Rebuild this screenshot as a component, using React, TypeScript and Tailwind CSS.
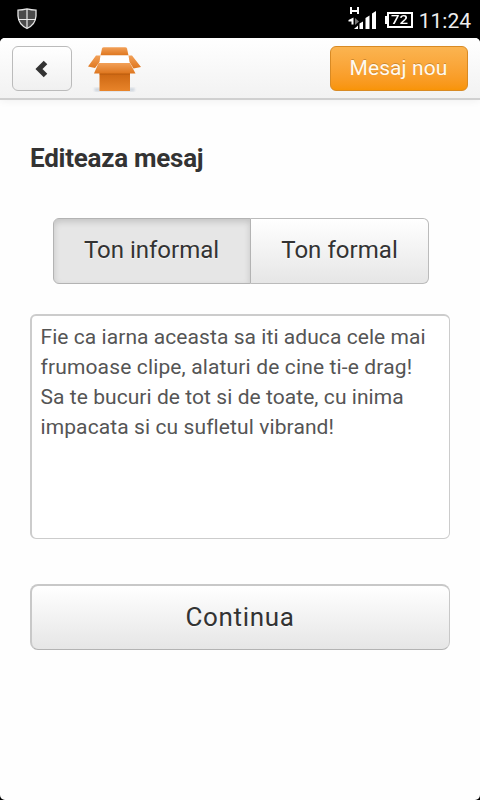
import React from "react";

function ShieldIcon() {
  return (
    <svg width="20" height="22" viewBox="0 0 20 22" className="block">
      <path d="M1 2.2Q5.500 2 10 .9Q14.500 2 19 2.200V8Q18.500 16.500 10 20.500Q1.500 16.500 1 8Z" fill="#4b4b4b" stroke="#e6e6e6" strokeWidth="1.3" />
      <path d="M10 1v19M1.300 11.500h17.400" stroke="#ececec" strokeWidth="1.200" />
    </svg>
  );
}

function SignalIcon() {
  return (
    <svg width="30" height="24" viewBox="0 0 30 24" className="block">
      <path d="M2 0h2v3h5V0h2v7H9V5H4v2H2z" fill="#fff" />
      <path d="M5.500 10.500v7h-2v-3H.5v-1.500z" fill="#fff" />
      <path d="M7 11l4 3.500-4 3.500z" fill="#777" />
      <path d="M10 18.500V22H6z" fill="#fff" />
      <path d="M11.500 16.500l3.500-2V22h-3.500zM17.500 11l4-2.500V22h-4zM24 6.500L28 4v18h-4z" fill="#fff" />
    </svg>
  );
}

function BatteryIcon() {
  return (
    <div className="flex items-center">
      <div className="h-2 w-[2px] bg-white" />
      <div className="flex h-4 w-[26px] items-center justify-center border-2 border-white">
        <span className="inline-block origin-center scale-x-[1.15] font-['Roboto',sans-serif] text-[13px] font-medium leading-none text-white">72</span>
      </div>
    </div>
  );
}

function BoxLogo() {
  return (
    <svg width="56" height="50" viewBox="0 0 56 50" className="block">
      <defs>
        <linearGradient id="flap" x1="0" y1="0" x2="0" y2="1">
          <stop offset="0" stopColor="#f2a058" />
          <stop offset="1" stopColor="#de761e" />
        </linearGradient>
        <linearGradient id="front" x1="0" y1="0" x2="0" y2="1">
          <stop offset="0" stopColor="#c9630f" />
          <stop offset="1" stopColor="#e8842a" />
        </linearGradient>
        <filter id="soft"><feGaussianBlur stdDeviation="0.8" /></filter>
      </defs>
      <path d="M8 42h41l-1 3.500H9z" fill="#b3c0cf" opacity=".6" filter="url(#soft)" />
      <path d="M16 2.500Q16.300 1.200 18 1.200h21q1.700 0 2 1.300L42.500 9.500H14.500z" fill="url(#flap)" />
      <path d="M14.500 9.500h28l2 8H12.500z" fill="#fff" />
      <path d="M14.500 9.500L10 9.500 2 20.500l7 1.500L13.500 16zM42.500 9.500h3.500l9 11.500-7.500 1.500L43.500 16z" fill="url(#flap)" />
      <path d="M13.500 25h30.500v20H13.500z" fill="url(#front)" />
      <path d="M12.500 17h31.500L49.500 27.500H8z" fill="url(#flap)" />
      <path d="M13.500 28.200h30.500" stroke="#b85c10" strokeWidth="1.300" opacity=".6" />
    </svg>
  );
}

export default function App() {
  return (
    <div className="h-[800px] w-[480px] overflow-hidden bg-black font-['Roboto',sans-serif] text-[#333]">
      <div className="flex h-[38px] items-center justify-between pl-[17px] pr-[9px]">
        <ShieldIcon />
        <div className="flex items-center">
          <SignalIcon />
          <div className="ml-[7px] mt-px"><BatteryIcon /></div>
          <span className="ml-[6px] mt-[3px] text-[21px] leading-6 text-[#eee]">11:24</span>
        </div>
      </div>
      <div className="h-[762px] overflow-hidden rounded-[5px] bg-[#fefefe]">
        <header className="flex h-[62px] items-start border-b-2 border-[#d0d0d0] bg-linear-to-b from-white to-[#f2f2f2] px-3 pt-2 shadow-[0_1px_8px_rgba(0,0,0,0.06)]">
          <button className="flex h-[45px] w-[60px] items-center justify-center rounded-[6px] border border-[#bbb] bg-linear-to-b from-white to-[#f0f0f0]">
            <svg width="14" height="18" viewBox="0 0 14 18" className="mr-[3px]">
              <path d="M11.500 2.500L5 9l6.500 6.500" fill="none" stroke="#333" strokeWidth="5" />
            </svg>
          </button>
          <div className="ml-[14px]"><BoxLogo /></div>
          <button className="ml-auto flex h-[45px] w-[138px] items-center justify-center rounded-[6px] border border-[#d88a24] bg-linear-to-b from-[#fbb450] to-[#f89406] text-[21px] tracking-[0.1px] text-[#fffaf0] [text-shadow:0_-1px_0_rgba(0,0,0,0.2)]">
            <span className="mr-px">Mesaj nou</span>
          </button>
        </header>
        <main className="px-[30px] pt-[38px]">
          <h1 className="h-[40px] text-[26px] font-bold leading-[40px] tracking-[-0.25px]">Editeaza mesaj</h1>
          <div className="ml-[23px] mt-10 flex h-[66px] w-[376px] text-[24px]">
            <button className="w-[198px] rounded-l-[6px] border border-[#b3b3b3] bg-[#e6e6e6] pb-[2px] shadow-[inset_0_3px_6px_rgba(0,0,0,0.15)] [text-shadow:0_1px_1px_rgba(255,255,255,0.75)]">
              <span className="mr-px">Ton informal</span>
            </button>
            <button className="w-[178px] rounded-r-[6px] border border-l-0 border-[#bbb] bg-linear-to-b from-white to-[#e6e6e6] pb-[2px] [text-shadow:0_1px_1px_rgba(255,255,255,0.75)]">
              <span className="tracking-[0.05px]">Ton formal</span>
            </button>
          </div>
          <div className="mt-[30px] h-[225px] w-[420px] rounded-[6px] border border-t-2 border-l-2 border-[#ccc] bg-white pl-[8.500px] pt-[6px] text-[21px] leading-[30px] tracking-[0.06px] text-[#555]">
            <div className="whitespace-nowrap">Fie ca iarna aceasta sa iti aduca cele mai</div>
            <div className="whitespace-nowrap tracking-[0.14px]">frumoase clipe, alaturi de cine ti-e drag!</div>
            <div className="whitespace-nowrap">Sa te bucuri de tot si de toate, cu inima</div>
            <div className="whitespace-nowrap tracking-[0.1px]">impacata si cu sufletul vibrand!</div>
          </div>
          <button className="mt-[45px] flex h-[66px] w-full items-center justify-center rounded-[8px] border border-t-2 border-l-2 border-[#c8c8c8] border-b-[#b3b3b3] bg-linear-to-b from-white to-[#e6e6e6] text-[26px] tracking-[0.65px] [text-shadow:0_1px_1px_rgba(255,255,255,0.75)]">
            <span className="mr-px">Continua</span>
          </button>
        </main>
      </div>
    </div>
  );
}
